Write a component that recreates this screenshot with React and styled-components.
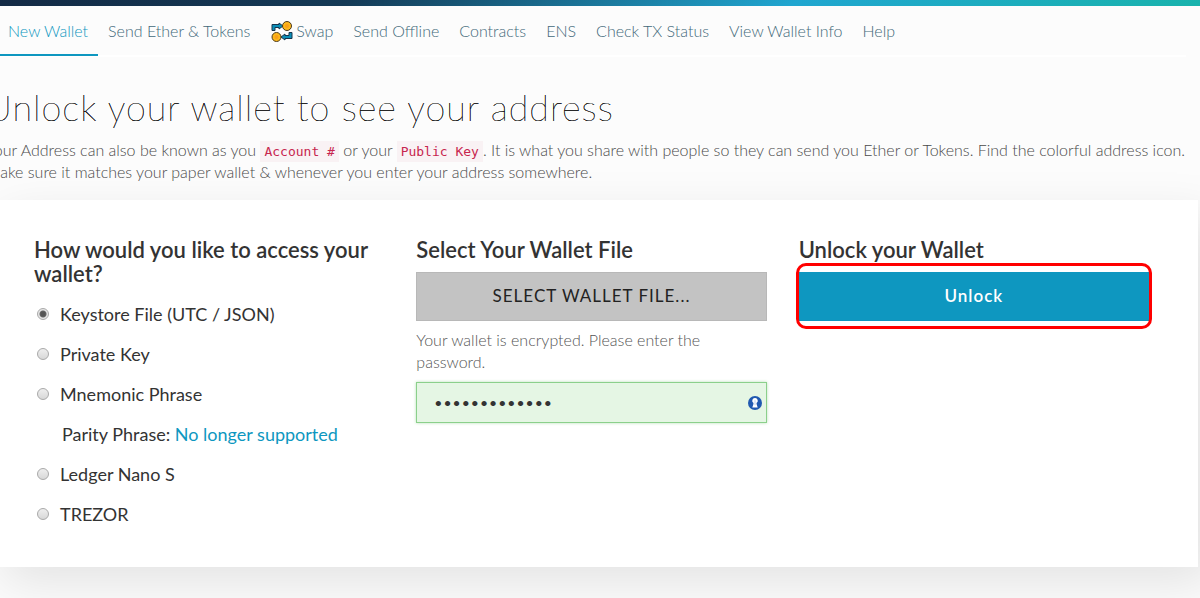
import React, { useState } from "react";
import styled, { createGlobalStyle } from "styled-components";

const GlobalStyle = createGlobalStyle`
  *, *::before, *::after { box-sizing: border-box; }
  body {
    margin: 0;
    min-height: 100vh;
    background: #fcfcfc;
    color: #333;
    font-family: Lato, "Liberation Sans", sans-serif;
    font-size: 16px;
    font-weight: 300;
    line-height: 22px;
  }
`;

const TopStripe = styled.div`
  height: 6px;
  background: linear-gradient(149deg, #132a45 0%, #143a56 29%, #20a6d0 66%, #19b3ac 100%);
`;

const Page = styled.div`
  margin: 0 2px 0 -14px;
`;

const Nav = styled.nav`
  display: flex;
  margin: 0 12px 0 12px;
  border-bottom: 2px solid #fff;
`;

const NavLink = styled.a`
  display: flex;
  align-items: center;
  gap: 3px;
  height: 50px;
  margin-bottom: -1px;
  padding: 2px 10px 0;
  border-bottom: 2px solid ${(p) => (p.$active ? "#0e97c0" : "transparent")};
  color: ${(p) => (p.$active ? "#0e97c0" : "#42697a")};
  text-decoration: none;
  white-space: nowrap;
`;

const Intro = styled.header`
  padding: 30px 0 17px;
`;

const Title = styled.h1`
  margin: 0 0 12px;
  color: #111;
  font-size: 36px;
  font-weight: 200;
  line-height: 40px;
  letter-spacing: 1px;
  text-shadow: 0 0 0 #111, 0 0 0 #111;
`;

const Lead = styled.p`
  margin: 0;
  color: #4a4a4a;
`;

const Code = styled.code`
  padding: 3px 4px;
  background: #f9f2f4;
  color: #c7254e;
  font-family: "DejaVu Sans Mono", monospace;
  font-size: 13px;
  font-weight: 400;
  line-height: 16px;
`;

const Card = styled.main`
  display: grid;
  grid-template-columns: repeat(3, 1fr);
  gap: 32px;
  padding: 38px 49px 33px 48px;
  background: #fff;
  box-shadow: 16px 16px 47px 0 rgba(0, 0, 0, 0.1);
`;

const Column = styled.section`
  min-width: 0;
`;

const Heading = styled.h2`
  margin: 0 0 8px;
  font-size: 22px;
  font-weight: 600;
  line-height: 24px;
`;

const Options = styled.div`
  display: grid;
`;

const Option = styled.label`
  display: flex;
  align-items: center;
  gap: 11px;
  height: 40px;
  padding-left: 3px;
  font-size: 18px;
  font-weight: 400;
`;

const OptionNote = styled.p`
  margin: 0;
  padding-left: 28px;
  font-size: 18px;
  font-weight: 400;
  line-height: 40px;
`;

const TextLink = styled.a`
  color: #0e97c0;
  text-decoration: none;
`;

const Radio = styled.input`
  appearance: none;
  width: 12px;
  height: 12px;
  margin: 0;
  border: 1px solid #a9a9a9;
  border-radius: 50%;
  background: linear-gradient(#eee, #d8d8d8);
  &:checked {
    background: radial-gradient(circle, #555 0 2px, #666 3px, #e6e6e6 4px);
  }
`;

const Button = styled.button`
  position: relative;
  display: block;
  width: 100%;
  height: 49px;
  margin: 10px 0 0;
  padding: 0 6px 2px;
  border: 0;
  font-family: inherit;
  font-size: 17px;
  letter-spacing: 1px;
`;

const FileButton = styled(Button)`
  border: 1px solid #b8b8b8;
  background: #c3c3c3;
  color: #222;
  font-weight: 400;
`;

const UnlockButton = styled(Button)`
  background: #0e97c0;
  color: #fff;
  font-weight: 600;
  &::after {
    content: "";
    position: absolute;
    inset: -9px -3px -8px;
    border: 3px solid #f00;
    border-radius: 10px;
  }
`;

const Hint = styled.label`
  display: block;
  margin: 8px 0 9px;
  color: #555;
`;

const PasswordBox = styled.div`
  display: flex;
  align-items: center;
  height: 41px;
  padding-right: 4px;
  border: 1px solid #8bd08b;
  background: #e5f6e4;
  box-shadow: 0 0 3px #b9dfb8;
`;

const Password = styled.input`
  flex: 1;
  min-width: 0;
  padding: 0 17px;
  border: 0;
  outline: 0;
  background: transparent;
  color: #333;
  font-family: Lato, "Liberation Sans", sans-serif;
  font-size: 14px;
  letter-spacing: 1px;
`;

const navItems = [
  "New Wallet",
  "Send Ether & Tokens",
  "Swap",
  "Send Offline",
  "Contracts",
  "ENS",
  "Check TX Status",
  "View Wallet Info",
  "Help",
];

const options = [
  "Keystore File (UTC / JSON)",
  "Private Key",
  "Mnemonic Phrase",
  null,
  "Ledger Nano S",
  "TREZOR",
];

function SwapIcon() {
  return (
    <svg width="23" height="21" viewBox="-1 0 22 21" aria-hidden="true">
      <g fill="#0b8fb8" stroke="#17344d" strokeWidth="1">
        <path d="M.5 9.500V3.500H7.500V2L11.500 5 7.500 8V6.500H3.500v3z" />
        <path d="M20.500 11.500v6H13.500v1.500L9.500 16l4-3v1.500h4v-3z" />
      </g>
      <g fill="#fdb71a" stroke="#4a3a22" strokeWidth="1">
        <circle cx="15.500" cy="5" r="4.500" />
        <circle cx="5" cy="16" r="4.500" />
      </g>
      <g fill="#f8a01c">
        <circle cx="15.500" cy="5" r="2" />
        <circle cx="5" cy="16" r="2" />
      </g>
    </svg>
  );
}

function KeyholeIcon() {
  return (
    <svg width="14" height="14" viewBox="0 0 14 14" aria-hidden="true">
      <circle cx="7" cy="7" r="7" fill="#2059b0" />
      <path d="M7 2a2.700 2.700 0 0 0-1.500 5L5.300 8.500 4.300 11.500h5.400L8.700 8.500 8.500 7A2.700 2.700 0 0 0 7 2z" fill="#fff" />
      <path d="M7 4.200v5" stroke="#c3d4ec" strokeWidth="1" />
    </svg>
  );
}

export default function App() {
  const [method, setMethod] = useState(options[0]);
  const [password, setPassword] = useState("correct-horse");

  return (
    <>
      <GlobalStyle />
      <TopStripe />
      <Page>
        <Nav>
          {navItems.map((item, i) => (
            <NavLink key={item} href="#" $active={i === 0}>
              {item === "Swap" && <SwapIcon />}
              {item}
            </NavLink>
          ))}
        </Nav>
        <Intro>
          <Title>Unlock your wallet to see your address</Title>
          <Lead>
            Your Address can also be known as you <Code>Account #</Code> or your <Code>Public Key</Code>. It is what
            you share with people so they can send you Ether or Tokens. Find the colorful address icon.
            <br />
            Make sure it matches your paper wallet &amp; whenever you enter your address somewhere.
          </Lead>
        </Intro>
        <Card>
          <Column>
            <Heading>How would you like to access your wallet?</Heading>
            <Options role="radiogroup" aria-label="Access method">
              {options.map((option) =>
                option ? (
                  <Option key={option}>
                    <Radio
                      type="radio"
                      name="method"
                      checked={method === option}
                      onChange={() => setMethod(option)}
                    />
                    {option}
                  </Option>
                ) : (
                  <OptionNote key="parity">
                    Parity Phrase: <TextLink href="#">No longer supported</TextLink>
                  </OptionNote>
                )
              )}
            </Options>
          </Column>
          <Column>
            <Heading>Select Your Wallet File</Heading>
            <FileButton type="button">SELECT WALLET FILE...</FileButton>
            <Hint htmlFor="password">Your wallet is encrypted. Please enter the password.</Hint>
            <PasswordBox>
              <Password
                id="password"
                type="password"
                value={password}
                onChange={(e) => setPassword(e.target.value)}
              />
              <KeyholeIcon />
            </PasswordBox>
          </Column>
          <Column>
            <Heading>Unlock your Wallet</Heading>
            <UnlockButton type="button">Unlock</UnlockButton>
          </Column>
        </Card>
      </Page>
    </>
  );
}
